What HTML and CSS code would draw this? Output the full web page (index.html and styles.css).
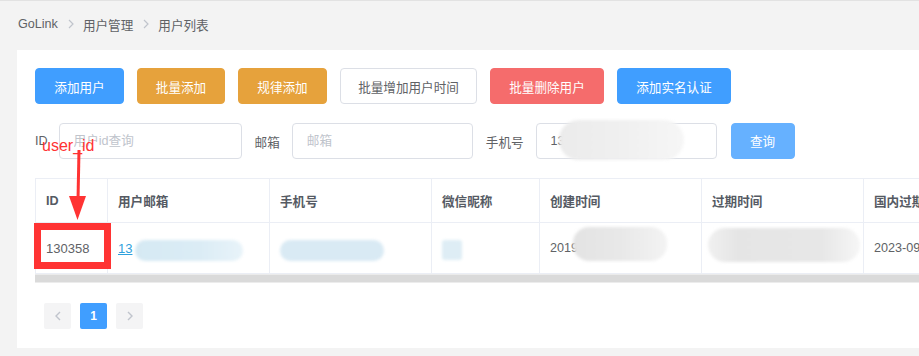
FILE: index.html
```html
<!DOCTYPE html>
<html lang="zh-CN">
<head>
    <meta charset="UTF-8">
    <meta name="viewport" content="width=device-width, initial-scale=1.0">
    <title>用户列表 - GoLink</title>
    <link rel="stylesheet" href="styles.css">
</head>
<body>
<div class="breadcrumb">
    <span class="crumb">GoLink</span>
    <svg class="sep" width="6" height="10" viewBox="0 0 6 10"><polyline points="1,1 5,5 1,9" fill="none" stroke="#c0c4cc" stroke-width="1.2"/></svg>
    <span class="crumb">用户管理</span>
    <svg class="sep" width="6" height="10" viewBox="0 0 6 10"><polyline points="1,1 5,5 1,9" fill="none" stroke="#c0c4cc" stroke-width="1.2"/></svg>
    <span class="crumb">用户列表</span>
</div>

<div class="card">
    <div class="toolbar">
        <button class="btn btn-primary">添加用户</button>
        <button class="btn btn-warning">批量添加</button>
        <button class="btn btn-warning">规律添加</button>
        <button class="btn btn-default">批量增加用户时间</button>
        <button class="btn btn-danger">批量删除用户</button>
        <button class="btn btn-primary">添加实名认证</button>
    </div>

    <form class="search" onsubmit="return false">
        <label class="field field-id"><span class="label">ID</span><input class="input" placeholder="用户id查询"></label>
        <label class="field"><span class="label">邮箱</span><input class="input" placeholder="邮箱"></label>
        <label class="field">
            <span class="label">手机号</span>
            <span class="input-wrap">
                <input class="input" value="13">
                <span class="smudge smudge-phone"></span>
            </span>
        </label>
        <button class="btn btn-query">查询</button>
    </form>

    <div class="table-wrap">
        <table class="grid">
            <colgroup>
                <col style="width:72px"><col style="width:162px"><col style="width:162px"><col style="width:108px">
                <col style="width:162px"><col style="width:162px"><col style="width:162px">
            </colgroup>
            <thead>
                <tr>
                    <th>ID</th><th>用户邮箱</th><th>手机号</th><th>微信昵称</th>
                    <th>创建时间</th><th>过期时间</th><th>国内过期时间</th>
                </tr>
            </thead>
            <tbody>
                <tr>
                    <td>130358</td>
                    <td class="cell-rel"><a class="link" href="#">13</a>
                        <span class="smudge smudge-mail-a"></span>
                        <span class="smudge smudge-mail-b"></span>
                        <span class="smudge smudge-mail-c"></span>
                    </td>
                    <td></td>
                    <td></td>
                    <td class="cell-rel">2019-<span class="smudge smudge-created"></span></td>
                    <td class="cell-rel"><span class="smudge smudge-expire"></span></td>
                    <td>2023-09-30 23:59:59</td>
                </tr>
            </tbody>
        </table>
        <div class="hscroll"></div>
    </div>

    <div class="pager">
        <button class="page-btn"><svg width="6" height="10" viewBox="0 0 6 10"><polyline points="5,1 1,5 5,9" fill="none" stroke="#c0c4cc" stroke-width="1.4"/></svg></button>
        <button class="page-btn active">1</button>
        <button class="page-btn"><svg width="6" height="10" viewBox="0 0 6 10"><polyline points="1,1 5,5 1,9" fill="none" stroke="#c0c4cc" stroke-width="1.4"/></svg></button>
    </div>

    <!-- annotation drawn over the screenshot -->
    <span class="note-text">user_id</span>
    <svg class="note-arrow" width="30" height="76" viewBox="0 0 30 76">
        <line x1="16" y1="2" x2="15" y2="52" stroke="#f33" stroke-width="3"/>
        <polygon points="6,48 23,48 14.5,72" fill="#f33"/>
    </svg>
    <span class="note-box"></span>
</div>
</body>
</html>
```

FILE: styles.css
```css
html, body { overflow: hidden; }
body {
    margin: 0; background: #f3f3f3; border-top: 1px solid #e2e2e2;
    font-family: "Liberation Sans", "Noto Sans CJK SC", sans-serif; font-size: 12.6px; color: #606266;
}

.breadcrumb { height: 46px; display: flex; align-items: center; padding-left: 18px; margin-bottom: 3px; }
.breadcrumb .crumb { color: #606266; }
.breadcrumb .sep { margin: 0 9px 0 10px; }

.card { position: relative; margin-left: 17px; width: 1100px; background: #fff; padding: 18px 18px 19px; box-sizing: border-box; }

.btn {
    height: 36px; padding: 0 18px; border: 1px solid transparent; border-radius: 4px;
    font: inherit; font-size: 12.6px; color: #fff; cursor: pointer; white-space: nowrap;
}
.btn-primary { background: #409eff; border-color: #409eff; }
.btn-warning { background: #e6a23c; border-color: #e6a23c; }
.btn-danger { background: #f56c6c; border-color: #f56c6c; }
.btn-default { background: #fff; border-color: #dcdfe6; color: #606266; }
.btn-query { background: #66b1ff; border-color: #66b1ff; width: 64px; padding: 0; margin-left: 1px; margin-top: -1px; }

.toolbar { display: flex; gap: 13px; }
.toolbar .btn:nth-child(1) { width: 89px; padding: 0; }
.toolbar .btn:nth-child(2) { width: 88px; padding: 0; }
.toolbar .btn:nth-child(3) { width: 89px; padding: 0; }
.toolbar .btn:nth-child(4) { width: 137px; padding: 0; }
.toolbar .btn:nth-child(5),
.toolbar .btn:nth-child(6) { width: 114px; padding: 0; }

.search { display: flex; align-items: center; margin-top: 19px; }
.field { display: flex; align-items: center; margin-right: 13px; }
.field .label { margin-right: 12px; color: #606266; }
.field-id .label { margin-right: 11px; }
.input {
    width: 181px; height: 36px; box-sizing: border-box; border: 1px solid #dcdfe6; border-radius: 4px;
    padding: 0 14px; font: inherit; font-size: 12.6px; color: #606266; outline: none;
}
.field-id .input { width: 183px; }
.input::placeholder { color: #c0c4cc; }
.input-wrap { position: relative; display: block; }

.smudge { position: absolute; border-radius: 14px; filter: blur(1.5px); pointer-events: none; }
.smudge-phone { left: 23px; top: -3px; width: 125px; height: 40px; background: linear-gradient(90deg, #ebebeb, #efefef 45%, #f6f6f6); border-radius: 20px; }

.table-wrap { margin-top: 19px; }
.grid { border-collapse: collapse; table-layout: fixed; width: 990px; }
.grid th, .grid td { border: 1px solid #ebeef5; text-align: left; padding: 0 10px; white-space: nowrap; overflow: visible; }
.grid th { height: 43px; font-weight: bold; color: #555a63; }
.grid td { height: 50px; color: #606266; }
.grid td:first-child { font-size: 13px; }
.cell-rel { position: relative; }
.link { color: #2ea0dc; text-decoration: underline; font-size: 13px; }

.smudge-mail-a { left: 27px; top: 17px; width: 108px; height: 21px; background: linear-gradient(90deg, #d5e9f3, #dbecf5 60%, #e8f3f9); }
.smudge-mail-b { left: 172px; top: 17px; width: 104px; height: 21px; background: #d9eaf4; }
.smudge-mail-c { left: 334px; top: 17px; width: 20px; height: 20px; background: #deedf5; border-radius: 3px; }
.smudge-created { left: 33px; top: 4px; width: 94px; height: 34px; background: linear-gradient(90deg, #e3e3e3, #e8e8e8 50%, #f3f3f3); border-radius: 16px; }
.smudge-expire { left: 6px; top: 5px; width: 152px; height: 34px; background: linear-gradient(90deg, #f0f0f0, #e5e5e5 20%, #e7e7e7 75%, #f6f6f6); border-radius: 18px; }

.hscroll { height: 7px; width: 990px; background: #dadada; border-top: 1px solid #ebebeb; border-bottom: 1px solid #ececec; }

.pager { display: flex; gap: 9px; margin-top: 20px; padding-left: 9px; }
.page-btn {
    width: 27px; height: 26px; border: none; border-radius: 2px; background: #f4f4f5;
    display: flex; align-items: center; justify-content: center; padding: 0;
    font: inherit; font-weight: bold; font-size: 12px; color: #606266;
}
.page-btn.active { background: #409eff; color: #fff; }

.note-text { position: absolute; left: 25px; top: 88px; font-size: 16px; line-height: 16px; color: #f33; }
.note-arrow { position: absolute; left: 46px; top: 98px; }
.note-box { position: absolute; left: 17px; top: 173px; width: 77px; height: 46px; box-sizing: border-box; border: 7px solid #f33; }
```
